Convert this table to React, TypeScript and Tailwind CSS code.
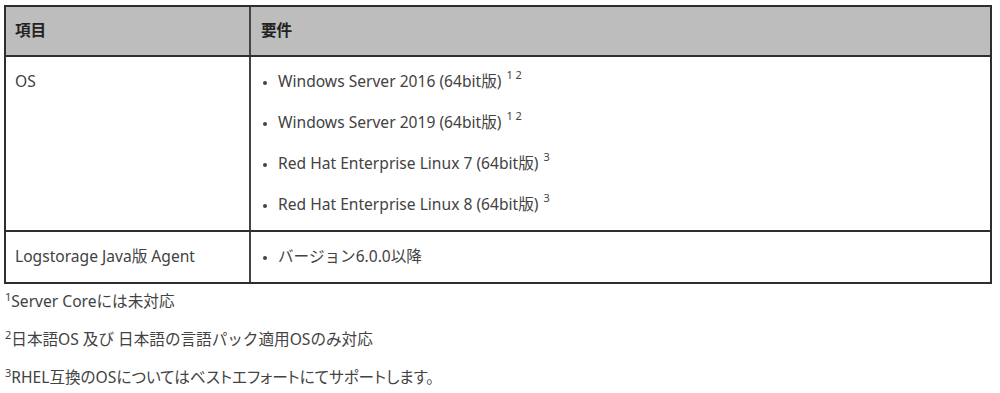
import React from "react";

const font = { fontFamily: '"Noto Sans", "Noto Sans CJK JP", sans-serif' };

function Sup({ children }: { children: React.ReactNode }) {
  return <span className="text-[11px] relative -top-[7px] ml-[5px] leading-none">{children}</span>;
}

function Item({ children }: { children: React.ReactNode }) {
  return (
    <li className="flex items-center h-[24px]">
      <span className="w-[17px] shrink-0 flex items-center">
        <span className="block w-[4px] h-[4px] rounded-full bg-[#444] ml-[2px] mt-[1px]" />
      </span>
      <span className="flex items-center">{children}</span>
    </li>
  );
}

function FSup({ children }: { children: React.ReactNode }) {
  return <span className="text-[11px] relative -top-[6px] leading-none">{children}</span>;
}

export default function App() {
  return (
    <div className="w-[1000px] h-[393px] bg-white text-[#424242] text-[15.6px]" style={font}>
      <div className="pt-[5px] pl-[4px]">
        <div className="w-[988px] border-2 border-[#2e2e2e]">
          <div className="flex h-[50px] bg-[#bdbdbd] border-b-2 border-[#2e2e2e] font-bold text-[#222]">
            <div className="w-[245px] border-r-2 border-[#444] flex items-center pl-[9px]">項目</div>
            <div className="flex-1 flex items-center pl-[10px]">要件</div>
          </div>
          <div className="flex border-b-2 border-[#2e2e2e]">
            <div className="w-[245px] border-r-2 border-[#444] pl-[9px] pt-[13px]">
              <div className="h-[24px] flex items-center">OS</div>
            </div>
            <ul className="flex-1 pl-[10px] pt-[13px] pb-[13px] flex flex-col gap-[17px]">
              <Item>Windows Server 2016 (64bit版)<Sup>1 2</Sup></Item>
              <Item>Windows Server 2019 (64bit版)<Sup>1 2</Sup></Item>
              <Item>Red Hat Enterprise Linux 7 (64bit版)<Sup>3</Sup></Item>
              <Item>Red Hat Enterprise Linux 8 (64bit版)<Sup>3</Sup></Item>
            </ul>
          </div>
          <div className="flex h-[50px]">
            <div className="w-[245px] border-r-2 border-[#444] pl-[9px] flex items-center">Logstorage Java版 Agent</div>
            <ul className="flex-1 pl-[10px] flex items-center">
              <Item>バージョン6.0.0以降</Item>
            </ul>
          </div>
        </div>
      </div>
      <div className="pl-[5px] pt-[6px] flex flex-col gap-[14px]">
        <p className="h-[24px] flex items-center"><FSup>1</FSup>Server Coreには未対応</p>
        <p className="h-[24px] flex items-center"><FSup>2</FSup>日本語OS 及び 日本語の言語パック適用OSのみ対応</p>
        <p className="h-[24px] flex items-center [font-feature-settings:'palt']"><FSup>3</FSup>RHEL互換のOSについてはベストエフォートにてサポートします。</p>
      </div>
    </div>
  );
}
